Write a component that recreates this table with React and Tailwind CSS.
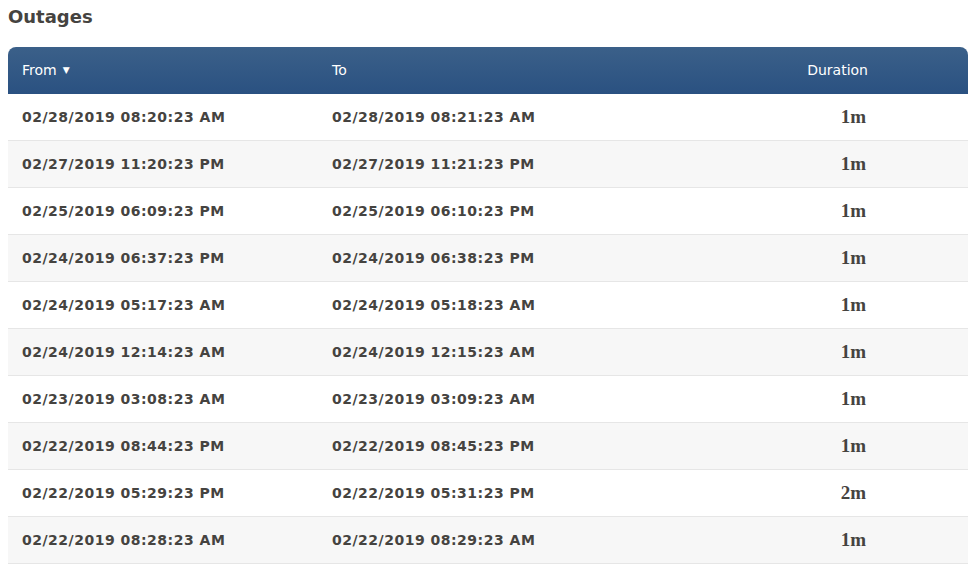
import React from "react";

const outages = [
	{ from: "02/28/2019 08:20:23 AM", to: "02/28/2019 08:21:23 AM", duration: "1m" },
	{ from: "02/27/2019 11:20:23 PM", to: "02/27/2019 11:21:23 PM", duration: "1m" },
	{ from: "02/25/2019 06:09:23 PM", to: "02/25/2019 06:10:23 PM", duration: "1m" },
	{ from: "02/24/2019 06:37:23 PM", to: "02/24/2019 06:38:23 PM", duration: "1m" },
	{ from: "02/24/2019 05:17:23 AM", to: "02/24/2019 05:18:23 AM", duration: "1m" },
	{ from: "02/24/2019 12:14:23 AM", to: "02/24/2019 12:15:23 AM", duration: "1m" },
	{ from: "02/23/2019 03:08:23 AM", to: "02/23/2019 03:09:23 AM", duration: "1m" },
	{ from: "02/22/2019 08:44:23 PM", to: "02/22/2019 08:45:23 PM", duration: "1m" },
	{ from: "02/22/2019 05:29:23 PM", to: "02/22/2019 05:31:23 PM", duration: "2m" },
	{ from: "02/22/2019 08:28:23 AM", to: "02/22/2019 08:29:23 AM", duration: "1m" },
];

const OutageRow = ({ outage, striped }) => (
	<div
		className={`grid grid-cols-[310px_310px_1fr] h-[47px] items-center border-b border-[#e6e6e6] ${
			striped ? "bg-[#f7f7f7]" : "bg-white"
		}`}>
		<div className="pl-[14px] pt-[1px] text-[14px] font-bold tracking-[0.5px]">{outage.from}</div>
		<div className="pl-[14px] pt-[1px] text-[14px] font-bold tracking-[0.5px]">{outage.to}</div>
		<div className="pr-[102px] text-right text-[19px] font-bold font-['Liberation_Serif',serif]">
			{outage.duration}
		</div>
	</div>
);

export default function App() {
	return (
		<div className="min-h-[570px] bg-white px-2 font-['DejaVu_Sans',sans-serif] text-[#454340]">
			<h2 className="pt-[3px] mb-[17px] text-[18px] leading-[27px] font-bold">Outages</h2>

			<div className="w-[960px]">
				<div className="grid grid-cols-[310px_310px_1fr] h-[47px] items-center rounded-t-[8px] bg-gradient-to-b from-[#3b6089] to-[#2a5181] text-white text-[14px]">
					<div className="pl-[14px] flex items-center gap-[6px]">
						From
						<span className="text-[9px] leading-none">▼</span>
					</div>
					<div className="pl-[14px]">To</div>
					<div className="pr-[100px] text-right">Duration</div>
				</div>

				{outages.map((outage, index) => (
					<OutageRow key={index} outage={outage} striped={index % 2 === 1} />
				))}
			</div>
		</div>
	);
}
